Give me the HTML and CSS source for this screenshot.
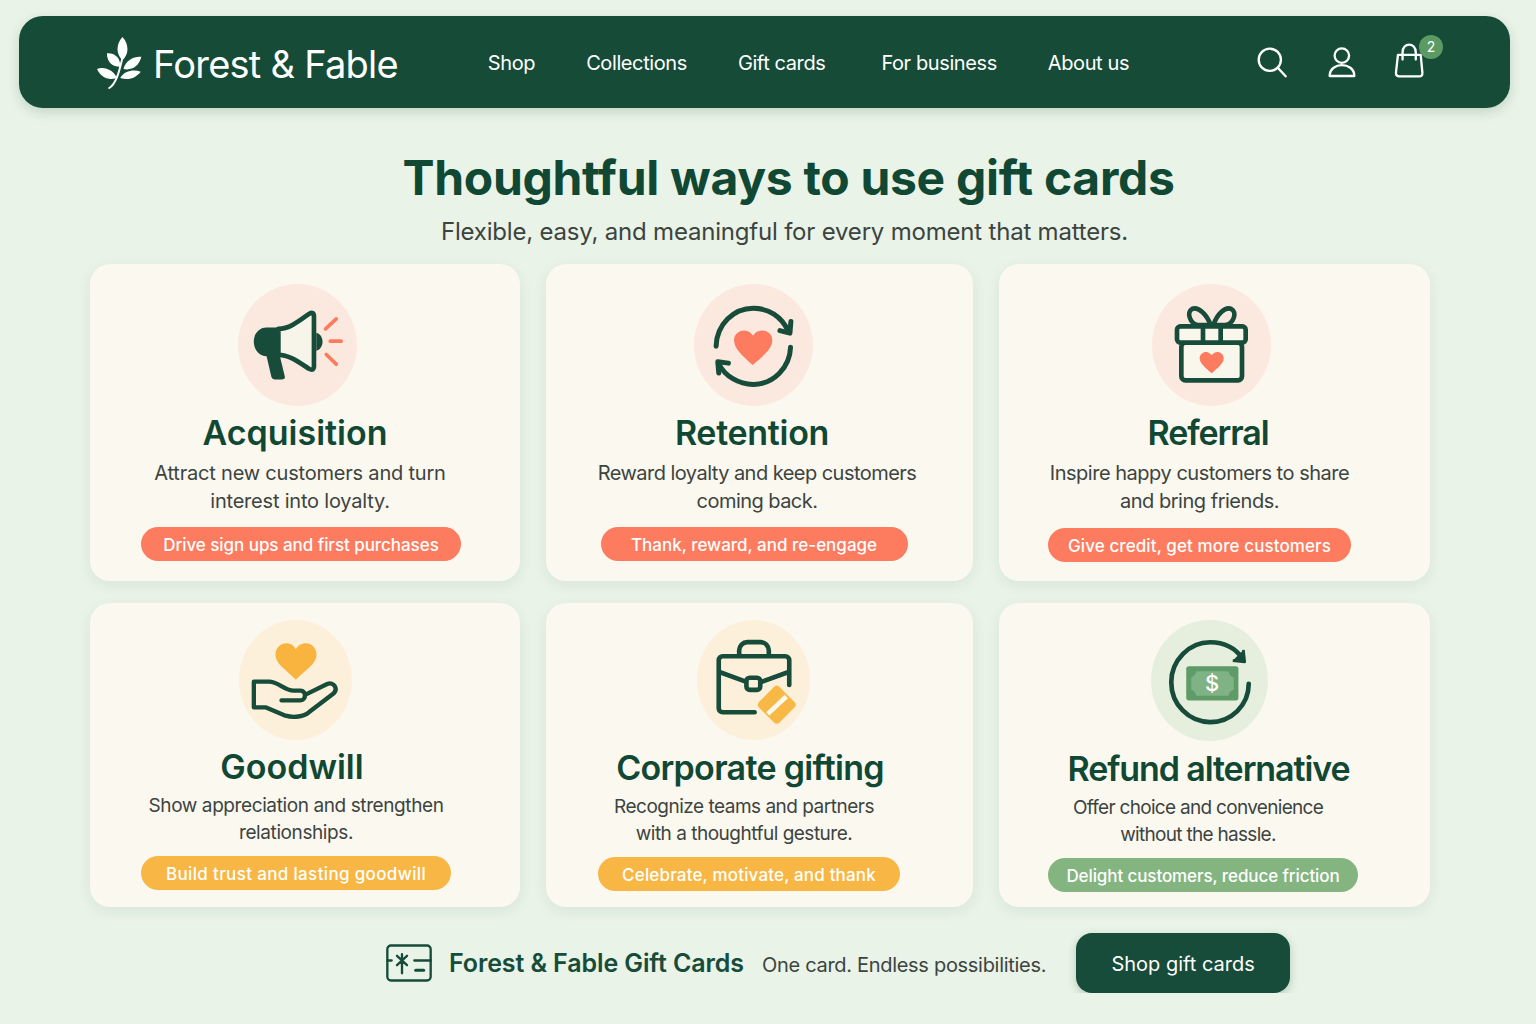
FILE: index.html
```html
<!DOCTYPE html>
<html lang="en">
<head>
    <meta charset="UTF-8">
    <meta name="viewport" content="width=device-width, initial-scale=1.0">
    <title>Forest &amp; Fable Gift Cards</title>
    <link rel="stylesheet" href="styles.css">
</head>
<body>

    <!-- Top navigation -->
    <header class="navbar">
        <a href="#" class="logo">
            <svg class="logo-mark" viewBox="285 105 145 160" fill="#fff">
                <path d="M325 262C345 250 355 215 365 170" fill="none" stroke="#fff" stroke-width="6" stroke-linecap="round"/>
                <path d="M365 108C385 130 385 160 365 178C345 160 345 130 365 108Z"/>
                <path d="M318 157C345 155 360 175 358 198C335 198 318 185 318 157Z"/>
                <path d="M422 168C405 165 375 175 368 205C395 210 415 195 422 168Z"/>
                <path d="M288 205C310 195 340 210 348 232C320 240 300 230 288 205Z"/>
                <path d="M420 213C400 205 370 210 358 232C385 240 405 232 420 213Z"/>
            </svg>
            <span>Forest &amp; Fable</span>
        </a>
        <nav class="nav-links">
            <a href="#">Shop</a>
            <a href="#">Collections</a>
            <a href="#">Gift cards</a>
            <a href="#" class="nav-business">For business</a>
            <a href="#">About us</a>
        </nav>
        <div class="nav-icons">
            <svg class="icon-search" viewBox="108 110 95 95" fill="none" stroke="#fff" stroke-width="7" stroke-linecap="round">
                <circle cx="149" cy="151" r="33"/>
                <path d="M174 176L196 200"/>
            </svg>
            <svg class="icon-user" viewBox="325 110 85 95" fill="none" stroke="#fff" stroke-width="7" stroke-linejoin="round">
                <circle cx="367" cy="138" r="22"/>
                <path d="M330 200C330 177 350 167 367 167C385 167 405 177 405 200Z"/>
            </svg>
            <div class="cart">
                <svg class="icon-bag" viewBox="522 100 92 106" fill="none" stroke="#fff" stroke-width="7" stroke-linecap="round" stroke-linejoin="round">
                    <path d="M533 136H602L607 190Q608 201 597 201H538Q526 201 527 190Z"/>
                    <path d="M547 150V128C547 97 587 97 587 128V150"/>
                </svg>
                <span class="cart-badge">2</span>
            </div>
        </div>
    </header>

    <main class="content">
        <div class="intro">
            <h1>Thoughtful ways to use gift cards</h1>
            <p>Flexible, easy, and meaningful for every moment that matters.</p>
        </div>

        <section class="cards">
            <!-- Acquisition -->
            <article class="card card-acquisition">
                <div class="icon-circle coral">
                    <svg viewBox="55 25 357 367">
                        <path d="M140 240L155 305Q157 312 165 312H187Q198 312 195 302L180 240Z" fill="#164c39"/>
                        <path d="M180 156H140C118 156 102 175 102 198C102 222 118 242 140 242H180Z" fill="#164c39"/>
                        <path d="M290 172C315 178 315 220 290 226Z" fill="#164c39"/>
                        <path d="M176 160C210 160 240 135 268 115Q283 106 283 122V272Q283 288 268 280C240 262 210 238 176 238Z" fill="#f7f4e9" stroke="#164c39" stroke-width="14" stroke-linejoin="round"/>
                        <path d="M318 160L350 130M332 197H365M320 237L350 266" stroke="#fd7b5e" stroke-width="11" stroke-linecap="round" fill="none"/>
                    </svg>
                </div>
                <h2>Acquisition</h2>
                <p>Attract new customers and turn<br>interest into loyalty.</p>
                <span class="pill pill-coral">Drive sign ups and first purchases</span>
            </article>

            <!-- Retention -->
            <article class="card card-retention">
                <div class="icon-circle coral">
                    <svg viewBox="42 28 357 367">
                        <path d="M108 215C110 150 160 101 220 101C265 101 305 125 325 170" fill="none" stroke="#164c39" stroke-width="15" stroke-linecap="round"/>
                        <path d="M300 168L330 176L333 141" fill="none" stroke="#164c39" stroke-width="15" stroke-linecap="round" stroke-linejoin="round"/>
                        <path d="M332 218C330 280 280 330 220 330C175 330 135 305 116 268" fill="none" stroke="#164c39" stroke-width="15" stroke-linecap="round"/>
                        <path d="M145 266L113 262L116 296" fill="none" stroke="#164c39" stroke-width="15" stroke-linecap="round" stroke-linejoin="round"/>
                        <path d="M218 272C190 245 162 225 162 197C162 178 178 168 193 168C205 168 214 175 219 184C224 175 233 168 246 168C262 168 277 178 277 197C277 225 247 245 218 272Z" fill="#fd7b5e"/>
                    </svg>
                </div>
                <h2>Retention</h2>
                <p>Reward loyalty and keep customers<br>coming back.</p>
                <span class="pill pill-coral">Thank, reward, and re-engage</span>
            </article>

            <!-- Referral -->
            <article class="card card-referral">
                <div class="icon-circle coral">
                    <svg viewBox="52 30 357 364">
                        <path d="M228 152C215 118 190 96 172 104C155 113 165 148 190 152ZM236 152C248 118 272 96 290 104C308 113 298 148 272 152Z" fill="none" stroke="#164c39" stroke-width="14" stroke-linejoin="round"/>
                        <rect x="140" y="205" width="182" height="113" rx="12" fill="#f9f6ec" stroke="#164c39" stroke-width="14"/>
                        <rect x="127" y="156" width="206" height="49" rx="10" fill="#f9f6ec" stroke="#164c39" stroke-width="14"/>
                        <path d="M205 156V205M258 156V205" stroke="#164c39" stroke-width="14"/>
                        <path d="M231 297C212 280 195 268 195 252C195 240 205 233 214 233C221 233 227 237 231 243C235 237 241 233 248 233C258 233 267 240 267 252C267 268 250 280 231 297Z" fill="#fd7b5e"/>
                    </svg>
                </div>
                <h2>Referral</h2>
                <p>Inspire happy customers to share<br>and bring friends.</p>
                <span class="pill pill-coral">Give credit, get more customers</span>
            </article>

            <!-- Goodwill -->
            <article class="card card-goodwill">
                <div class="icon-circle amber narrow">
                    <svg viewBox="42 28 336 360">
                        <path d="M211 207C180 175 150 160 150 132C150 112 165 98 183 98C195 98 206 105 211 116C217 105 228 98 241 98C258 98 273 112 273 132C273 160 242 175 211 207Z" fill="#f9b440"/>
                        <path d="M168 269H225C243 268 243 240 225 240H205C175 240 160 213 130 213H85V290H120L180 315C205 322 235 318 250 305L322 250C340 235 325 212 305 220L240 252" fill="none" stroke="#164c39" stroke-width="13" stroke-linecap="round" stroke-linejoin="round"/>
                    </svg>
                </div>
                <h2>Goodwill</h2>
                <p>Show appreciation and strengthen<br>relationships.</p>
                <span class="pill pill-amber">Build trust and lasting goodwill</span>
            </article>

            <!-- Corporate gifting -->
            <article class="card card-corporate">
                <div class="icon-circle amber narrow">
                    <svg viewBox="47 30 343 360">
                        <path d="M222 308H125A12 12 0 0 1 113 296V150A12 12 0 0 1 125 138H315A12 12 0 0 1 327 150V225M175 138V120A25 25 0 0 1 200 95H240A25 25 0 0 1 265 120V138M113 185L195 215M245 215L327 185" fill="none" stroke="#164c39" stroke-width="14" stroke-linecap="round"/>
                        <rect x="197" y="203" width="42" height="37" rx="10" fill="none" stroke="#164c39" stroke-width="14"/>
                        <rect x="245" y="241" width="88" height="88" rx="12" fill="#f8b845" transform="rotate(45 289 285)"/>
                        <path d="M262 313L318 260" stroke="#fbf8f0" stroke-width="14"/>
                    </svg>
                </div>
                <h2>Corporate gifting</h2>
                <p>Recognize teams and partners<br>with a thoughtful gesture.</p>
                <span class="pill pill-amber">Celebrate, motivate, and thank</span>
            </article>

            <!-- Refund alternative -->
            <article class="card card-refund">
                <div class="icon-circle sage">
                    <svg viewBox="45 28 350 364">
                        <path d="M338 220C338 285 285 335 222 335C158 335 105 282 105 215C105 150 158 95 222 95C262 95 298 112 320 145" fill="none" stroke="#164c39" stroke-width="14" stroke-linecap="round"/>
                        <path d="M322 118L326 154L290 150" fill="#164c39" stroke="#164c39" stroke-width="8" stroke-linejoin="round"/>
                        <rect x="150" y="167" width="157" height="103" rx="8" fill="#5e9b66"/>
                        <path d="M180 182H277Q280 197 293 200V238Q280 241 277 256H180Q177 241 165 238V200Q177 197 180 182Z" fill="#7fb284"/>
                        <text x="228" y="242" class="bill-sign">$</text>
                    </svg>
                </div>
                <h2>Refund alternative</h2>
                <p>Offer choice and convenience<br>without the hassle.</p>
                <span class="pill pill-sage">Delight customers, reduce friction</span>
            </article>
        </section>

        <!-- Bottom call to action -->
        <div class="cta">
            <svg class="cta-icon" viewBox="45 55 138 113" fill="none" stroke="#164c39" stroke-width="7" stroke-linecap="round">
                <rect x="49" y="59" width="130" height="105" rx="11"/>
                <path d="M49 104H62M130 104H179M93 85V142M78 90L108 118M108 90L78 118"/>
                <path d="M134 133H158" stroke-width="9"/>
            </svg>
            <strong>Forest &amp; Fable Gift Cards</strong>
            <span class="cta-text">One card. Endless possibilities.</span>
            <a href="#" class="cta-button">Shop gift cards</a>
        </div>
    </main>

</body>
</html>
```

FILE: styles.css
```css
body {
    margin: 0;
    background-color: #e9f3e7;
    font-family: 'Inter', 'Noto Sans', sans-serif;
    color: #3c443f;
}

a {
    color: inherit;
    text-decoration: none;
}

.navbar {
    display: flex;
    align-items: center;
    height: 92px;
    margin: 16px 26px 0 19px;
    padding: 0 85px 0 77px;
    background-color: #154b37;
    border-radius: 24px;
    box-shadow: 0 4px 12px rgba(22, 76, 57, 0.18);
    color: white;
}

.logo {
    display: flex;
    align-items: center;
    gap: 9px;
    font-size: 38px;
    letter-spacing: -0.75px;
}

.logo span {
    margin-top: 4px;
}

.logo-mark {
    width: 48px;
    height: 53px;
}

.nav-links {
    display: flex;
    gap: 51px;
    margin: 2px 0 0 90px;
    font-size: 20px;
    letter-spacing: -0.4px;
}

.nav-business {
    margin-left: 5px;
}

.nav-icons {
    display: flex;
    align-items: center;
    gap: 40px;
    margin-left: auto;
}

.icon-search {
    width: 32px;
    height: 32px;
}

.icon-user {
    width: 28px;
    height: 32px;
}

.icon-bag {
    width: 31px;
    height: 35px;
    display: block;
}

.cart {
    position: relative;
    margin: -3px 0 0 -2px;
}

.cart-badge {
    position: absolute;
    top: -8px;
    right: -18px;
    width: 24px;
    height: 24px;
    border-radius: 50%;
    background: #5c9a64;
    font-size: 14px;
    line-height: 24px;
    text-align: center;
}

.content {
    padding: 0 106px 0 90px;
}

.intro {
    margin-left: 49px;
    text-align: center;
}

h1 {
    margin: 40px 0 8px 8px;
    font-size: 48px;
    line-height: 60px;
    font-weight: 700;
    letter-spacing: -0.3px;
    color: #104834;
}

.intro p {
    margin: 0 0 16px;
    font-size: 24px;
    line-height: 32px;
    letter-spacing: -0.2px;
}

.cards {
    display: grid;
    grid-template-columns: 430px 427px 431px;
    grid-template-rows: 317px 304px;
    gap: 22px 26px;
}

.card {
    display: flex;
    flex-direction: column;
    align-items: center;
    padding-top: 20px;
    box-sizing: border-box;
    background: #fbf8f0;
    border-radius: 20px;
    box-shadow: 0 4px 14px rgba(22, 76, 57, 0.08);
}

/* the contents of each card don't sit quite on its centre */
.card-acquisition { --icon: 16px; --title: 20px; --desc: 10px; --pill: 8px; --title-track: 0; --desc-track: -0.2px; --pill-w: 320px; --pill-track: -0.05px; }
.card-retention { --icon: 13px; --title: 15px; --desc: 5px; --pill: 11px; --title-track: -0.3px; --desc-track: -0.54px; --pill-w: 307px; --pill-track: 0; }
.card-referral { --icon: 7px; --title: 13px; --desc: 30px; --pill: 30px; --title-track: -1.1px; --desc-track: -0.48px; --pill-w: 303px; --pill-track: 0.1px; }
.card-goodwill { --icon: 20px; --title: 26px; --desc: 18px; --pill: 18px; --title-track: 0; --desc-track: -0.4px; --pill-w: 310px; --pill-track: 0.35px; }
.card-corporate { --icon: 13px; --title: 19px; --desc: 31px; --pill: 21px; --title-track: -0.7px; --desc-track: -0.5px; --pill-w: 302px; --pill-track: 0.17px; }
.card-refund { --icon: 11px; --title: 12px; --desc: 33px; --pill: 23px; --title-track: -1.1px; --desc-track: -0.7px; --pill-w: 310px; --pill-track: -0.1px; }

.icon-circle {
    flex: none;
    width: 119px;
    height: 122px;
    margin-right: var(--icon);
    border-radius: 50%;
}

.icon-circle.narrow {
    width: 113px;
    height: 120px;
}

.icon-circle svg {
    display: block;
    width: 100%;
    height: 100%;
}

.coral {
    background: #fbe9df;
}

.amber {
    background: #fcf0da;
}

.icon-circle.sage {
    background: #e6efdd;
    width: 117px;
    height: 121px;
}

.card h2 {
    margin: 5px var(--title) 4px 0;
    font-size: 34px;
    line-height: 44px;
    font-weight: 600;
    letter-spacing: var(--title-track);
    color: #104834;
}

.card p {
    margin: 0 var(--desc) 12px 0;
    font-size: 20px;
    line-height: 28px;
    letter-spacing: var(--desc-track);
    text-align: center;
}

.pill {
    width: var(--pill-w);
    height: 34px;
    margin-right: var(--pill);
    border-radius: 17px;
    font-size: 17px;
    line-height: 36px;
    font-weight: 500;
    letter-spacing: var(--pill-track);
    text-align: center;
    color: white;
}

.card-referral p {
    margin-bottom: 13px;
}

/* second row is set a little tighter */
.card-goodwill,
.card-corporate,
.card-refund {
    padding-top: 17px;
}

.card-goodwill h2 {
    margin-bottom: 3px;
}

.card-corporate h2,
.card-refund h2 {
    margin-top: 6px;
    margin-bottom: 3px;
}

.card-goodwill p,
.card-corporate p,
.card-refund p {
    margin-bottom: 10px;
    font-size: 19px;
    line-height: 27px;
}

.pill-coral {
    background: #fd7b5e;
}

.pill-amber {
    background: #f8b744;
}

.pill-sage {
    background: #84b581;
}

.bill-sign {
    font-family: 'Inter', sans-serif;
    font-size: 66px;
    font-weight: 500;
    fill: white;
    text-anchor: middle;
}

.cta {
    display: flex;
    align-items: center;
    margin-top: 26px;
    padding-left: 296px;
    color: #164c39;
}

.cta-icon {
    width: 46px;
    height: 38px;
    margin-right: 17px;
}

.cta strong {
    font-size: 25px;
    font-weight: 600;
    letter-spacing: -0.1px;
}

.cta-text {
    margin: 3px 0 0 18px;
    font-size: 20px;
    letter-spacing: -0.3px;
    color: #3c443f;
}

.cta-button {
    width: 214px;
    height: 60px;
    margin-left: 30px;
    background: #164c39;
    border-radius: 16px;
    box-shadow: 0 3px 8px rgba(22, 76, 57, 0.25);
    color: white;
    font-size: 20px;
    line-height: 62px;
    text-align: center;
}
```
